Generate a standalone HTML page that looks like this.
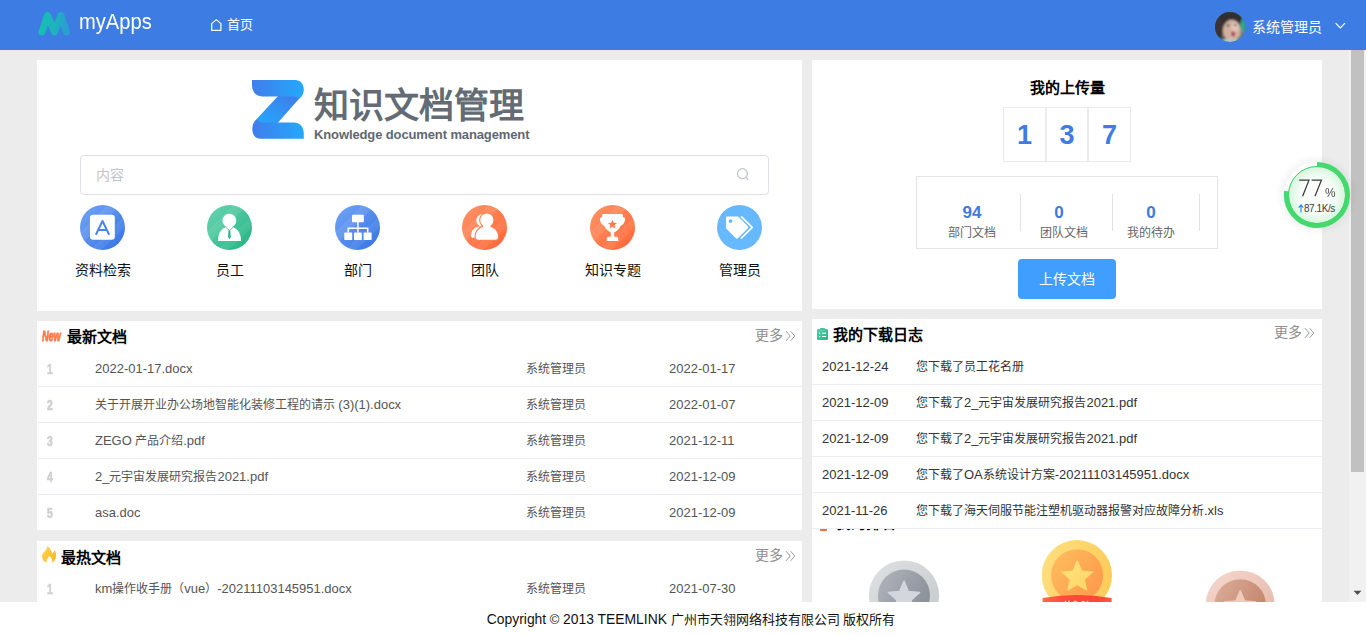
<!DOCTYPE html><html lang="zh-CN"><head><meta charset="utf-8"><title>myApps</title><style>
*{box-sizing:border-box;margin:0;padding:0}
html,body{width:1366px;height:635px;overflow:hidden}
body{position:relative;background:#ececec;font-family:"Liberation Sans",sans-serif;color:#333;font-size:12px}
.abs{position:absolute}
.e{font-size:1.0833em}.f{font-size:13.9px}
.hdr{position:absolute;left:0;top:0;width:1366px;height:50px;background:#3c7ce3}
.panel{position:absolute;background:#fff;overflow:hidden}
.txt{position:absolute;white-space:nowrap;line-height:20px;height:20px}
.ttl{font-size:15px;font-weight:bold;color:#000}
.more{font-size:14px;color:#8e8e8e}
.row{position:absolute;left:0;width:100%;height:36px;border-bottom:1px solid #ebecf4}
.num{position:absolute;left:10px;top:8px;line-height:20px;font-size:14px;font-weight:bold;color:#d0d0d0;-webkit-text-stroke:.7px #d0d0d0;transform:scaleX(.74);transform-origin:left center}
.doc{position:absolute;left:58px;top:8px;line-height:20px;color:#555;white-space:nowrap}
.aut{position:absolute;left:489px;top:8px;line-height:20px;color:#555;white-space:nowrap}
.dat{position:absolute;left:632px;top:8px;line-height:20px;color:#555;white-space:nowrap}
.ld{position:absolute;left:10px;top:8px;line-height:20px;color:#333;white-space:nowrap}
.lm{position:absolute;left:104px;top:8px;line-height:20px;color:#333;white-space:nowrap}
.ico{position:absolute;width:45px;height:45px;top:145px}
.lab{position:absolute;top:200px;width:100px;text-align:center;font-size:14px;line-height:20px;color:#111;white-space:nowrap}
</style></head><body>
<div class="hdr">
<svg class="abs" style="left:36px;top:9px" width="38" height="30" viewBox="0 0 38 30"><defs><linearGradient id="mg" x1="0" y1="0" x2="1" y2="0"><stop offset="0" stop-color="#17bdb6"/><stop offset=".55" stop-color="#1db3bd"/><stop offset="1" stop-color="#2a9fd2"/></linearGradient></defs><path d="M6 23 L11.5 6.5 L18.5 23 L25 6.5 L30.5 23" fill="none" stroke="url(#mg)" stroke-width="7" stroke-linecap="round" stroke-linejoin="round"/></svg>
<div class="txt" style="left:79px;top:9px;font-size:22px;line-height:26px;height:26px;color:#fff;transform:scaleX(.915);transform-origin:left center">myApps</div>
<svg class="abs" style="left:210px;top:18px" width="13" height="14" viewBox="0 0 13 14"><path d="M1.7 5.6 L6.3 1.6 L10.9 5.6 V12.3 H1.7 Z" fill="none" stroke="#fff" stroke-width="1.2" stroke-linejoin="round"/></svg>
<div class="txt" style="left:227px;top:15px;font-size:13px;color:#fff">首页</div>
<svg class="abs" style="left:1215px;top:12px" width="30" height="30" viewBox="0 0 30 30"><defs><clipPath id="avc"><circle cx="15" cy="15" r="15"/></clipPath><filter id="avb" x="-20%" y="-20%" width="140%" height="140%"><feGaussianBlur stdDeviation=".9"/></filter></defs><g clip-path="url(#avc)"><rect width="30" height="30" fill="#55625f"/><g filter="url(#avb)"><ellipse cx="13" cy="7" rx="14" ry="8.5" fill="#332d30"/><ellipse cx="3" cy="17" rx="5.5" ry="11" fill="#3a3336"/><ellipse cx="26" cy="24" rx="7" ry="8" fill="#6f7f7a"/><ellipse cx="16.8" cy="18.4" rx="9" ry="10.6" fill="#d2b0a0"/><ellipse cx="20" cy="15" rx="4" ry="5" fill="#e2c4b6"/><ellipse cx="13.2" cy="13.4" rx="1.6" ry="1.1" fill="#5a4444"/><ellipse cx="20.3" cy="13" rx="1.5" ry="1.1" fill="#6a5050"/><ellipse cx="18.2" cy="21.8" rx="2" ry="2.6" fill="#a93c4c"/><ellipse cx="29" cy="13" rx="3.4" ry="7" fill="#25aa8a"/><ellipse cx="15" cy="30" rx="9" ry="3.5" fill="#b5c7c2"/></g></g></svg>
<div class="txt" style="left:1252px;top:17px;font-size:14px;color:#fff">系统管理员</div>
<svg class="abs" style="left:1334px;top:21px" width="13" height="10" viewBox="0 0 13 10"><path d="M1.6 2.2 L6.3 6.9 L11 2.2" fill="none" stroke="#fff" stroke-width="1.2"/></svg>
</div>
<div class="panel" style="left:37px;top:60px;width:765px;height:251px">
<svg class="abs" style="left:215px;top:20px" width="53" height="60" viewBox="0 0 53 60"><defs><linearGradient id="zg1" x1="0" y1="0" x2="1" y2="0"><stop offset="0" stop-color="#417dec"/><stop offset="1" stop-color="#24a8fa"/></linearGradient><linearGradient id="zg2" x1="0" y1="1" x2="1" y2="0"><stop offset="0" stop-color="#23a9fb"/><stop offset="1" stop-color="#4179ea"/></linearGradient></defs><polygon points="27,15 49,16.5 24.8,44 6,44 4.2,39.4" fill="url(#zg2)"/><path d="M0 0 H43 C48.5 0 51.8 4 51.8 9.5 C51.8 14 50 17 47.3 18.4 L44 16.4 H10 C4 16.4 0 12 0 5 Z" fill="url(#zg1)"/><path d="M51.8 58.7 H8.8 C3.3 58.7 0.3 54.7 0.3 49.2 C0.3 45 1.8 41.8 4.4 39.2 L9 42.4 H41.8 C47.8 42.4 51.8 46.6 51.8 53.6 Z" fill="url(#zg1)"/></svg>

<div class="txt" style="left:277px;top:23px;font-size:35px;line-height:46px;height:46px;font-weight:bold;color:#636b74">知识文档管理</div>
<div class="txt" style="left:277px;top:66px;font-size:13px;line-height:18px;height:18px;font-weight:bold;color:#5f6771;letter-spacing:-.12px">Knowledge document management</div>
<div class="abs" style="left:43px;top:95px;width:689px;height:40px;border:1px solid #dcdfe6;border-radius:4px"></div>
<div class="txt" style="left:59px;top:105px;font-size:14px;color:#c0c4cc">内容</div>
<svg class="abs" style="left:698px;top:106px" width="16" height="16" viewBox="0 0 16 16"><circle cx="7.4" cy="7.6" r="5" fill="none" stroke="#c0c4cc" stroke-width="1.2"/><path d="M11 11.4 L13 13.6" stroke="#c0c4cc" stroke-width="1.3" stroke-linecap="round"/></svg>
<svg class="ico" style="left:43px" viewBox="0 0 45 45"><defs><linearGradient id="ib" x1="0" y1="0" x2="1" y2="1"><stop offset="0" stop-color="#73a6f5"/><stop offset="1" stop-color="#3472e4"/></linearGradient><linearGradient id="hl" x1="0" y1="0" x2="1" y2="1"><stop offset="0" stop-color="#fff" stop-opacity="0"/><stop offset=".3" stop-color="#fff" stop-opacity="0"/><stop offset=".3" stop-color="#fff" stop-opacity=".085"/><stop offset=".45" stop-color="#fff" stop-opacity=".085"/><stop offset=".45" stop-color="#fff" stop-opacity="0"/><stop offset=".62" stop-color="#fff" stop-opacity="0"/><stop offset=".62" stop-color="#fff" stop-opacity=".065"/><stop offset=".74" stop-color="#fff" stop-opacity=".065"/><stop offset=".74" stop-color="#fff" stop-opacity="0"/></linearGradient></defs><circle cx="22.5" cy="22.5" r="22.5" fill="url(#ib)"/><circle cx="22.5" cy="22.5" r="22.5" fill="url(#hl)"/><rect x="10" y="9.8" width="24.8" height="24.9" rx="3.2" fill="#fff"/><path d="M16.2 29 L22.5 16 L28.8 29 M18.2 25 H26.8" fill="none" stroke="#4a84ea" stroke-width="2" stroke-linecap="round" stroke-linejoin="round"/></svg>

<div class="lab" style="left:15.5px">资料检索</div>
<svg class="ico" style="left:170px" viewBox="0 0 45 45"><defs><linearGradient id="ig" x1="0" y1="0" x2="1" y2="1"><stop offset="0" stop-color="#6ad5b2"/><stop offset="1" stop-color="#22b282"/></linearGradient></defs><circle cx="22.5" cy="22.5" r="22.5" fill="url(#ig)"/><circle cx="22.5" cy="22.5" r="22.5" fill="url(#hl)"/><circle cx="22.4" cy="15.7" r="6.9" fill="#fff"/><path d="M11 35.9 C11 27 15.5 21.8 22.4 21.8 C29.3 21.8 34 27 34 35.9 Z" fill="#fff"/><path d="M19 22.6 L22.4 25.2 L25.8 22.6" fill="none" stroke="#3fbf95" stroke-width=".8"/><path d="M21.6 25 H23.2 L23.9 32 L22.4 34.2 L20.9 32 Z" fill="#35b98c"/></svg>

<div class="lab" style="left:142.5px">员工</div>
<svg class="ico" style="left:298px" viewBox="0 0 45 45"><circle cx="22.5" cy="22.5" r="22.5" fill="url(#ib)"/><circle cx="22.5" cy="22.5" r="22.5" fill="url(#hl)"/><rect x="17" y="9.8" width="11.8" height="7.4" rx=".8" fill="#fff"/><path d="M22.9 17 V23.2 M13.3 27.5 V23.2 H32.7 V27.5 M22.9 23.2 V27.5" fill="none" stroke="#fff" stroke-width="1.5"/><rect x="9.3" y="27.4" width="7.9" height="7.6" rx=".6" fill="#fff"/><rect x="19" y="27.4" width="7.8" height="7.6" rx=".6" fill="#fff"/><rect x="28.6" y="27.4" width="8" height="7.6" rx=".6" fill="#fff"/></svg>

<div class="lab" style="left:270.5px">部门</div>
<svg class="ico" style="left:425px" viewBox="0 0 45 45"><defs><linearGradient id="io" x1="0" y1="0" x2="1" y2="1"><stop offset="0" stop-color="#ff9468"/><stop offset="1" stop-color="#ff6536"/></linearGradient></defs><circle cx="22.5" cy="22.5" r="22.5" fill="url(#io)"/><circle cx="22.5" cy="22.5" r="22.5" fill="url(#hl)"/><circle cx="20.6" cy="15.4" r="6.3" fill="#fff"/><path d="M9.1 30.4 C9.1 25 13 21.6 19 21.6 H24 V32.8 H11.4 C9.9 32.8 9.1 31.9 9.1 30.4 Z" fill="#fff"/><g stroke="#ff8153" stroke-width="2.2"><circle cx="24.8" cy="15" r="6.6" fill="#fff"/><path d="M13.6 32 C13.6 25.6 18 21.4 24.8 21.4 C31.6 21.4 36 25.6 36 32 C36 33.8 35 34.7 33.4 34.7 H16.2 C14.6 34.7 13.6 33.8 13.6 32 Z" fill="#fff"/></g><circle cx="24.8" cy="15" r="6.6" fill="#fff"/><path d="M13.6 32 C13.6 25.6 18 21.4 24.8 21.4 C31.6 21.4 36 25.6 36 32 C36 33.8 35 34.7 33.4 34.7 H16.2 C14.6 34.7 13.6 33.8 13.6 32 Z" fill="#fff"/><rect x="21" y="19" width="7.6" height="4.4" fill="#fff"/></svg>

<div class="lab" style="left:397.5px">团队</div>
<svg class="ico" style="left:553px" viewBox="0 0 45 45"><circle cx="22.5" cy="22.5" r="22.5" fill="url(#io)"/><circle cx="22.5" cy="22.5" r="22.5" fill="url(#hl)"/><path d="M13.5 9 H31.5 C32.6 9 33.2 9.8 33 10.8 L32.8 12 C34.4 12 35.2 13.2 35 14.8 C34.6 18 32.8 20.2 30.6 21 C28.8 24.6 26.4 26.6 24.2 27.4 V31.8 H26.6 C27.6 31.8 28.2 32.6 28.2 33.6 V36 H16.8 V33.6 C16.8 32.6 17.4 31.8 18.4 31.8 H20.8 V27.4 C18.6 26.6 16.2 24.6 14.4 21 C12.2 20.2 10.4 18 10 14.8 C9.8 13.2 10.6 12 12.2 12 L12 10.8 C11.8 9.8 12.4 9 13.5 9 Z" fill="#fff"/><path d="M22.5 14.8 L23.8 17.8 L27 18.1 L24.6 20.2 L25.3 23.4 L22.5 21.7 L19.7 23.4 L20.4 20.2 L18 18.1 L21.2 17.8 Z" fill="#ff7a4c"/></svg>

<div class="lab" style="left:525.5px">知识专题</div>
<svg class="ico" style="left:680px" viewBox="0 0 45 45"><circle cx="22.5" cy="22.5" r="22.5" fill="#66b8ff"/><path d="M10.4 11.6 H20.6 C21.2 11.6 21.6 11.8 22 12.2 L30.6 21 C31.4 21.8 31.4 22.8 30.6 23.6 L21.2 33 C20.4 33.8 19.4 33.8 18.6 33 L9.6 24 C9.2 23.6 9 23.2 9 22.6 V13 C9 12.2 9.6 11.6 10.4 11.6 Z" fill="#fff"/><circle cx="13.6" cy="16.1" r="1.9" fill="#66b8ff"/><path d="M24.6 11.9 L35.2 22.3 L24.4 33.2" fill="none" stroke="#fff" stroke-width="1.7" stroke-linecap="round" stroke-linejoin="round"/></svg>

<div class="lab" style="left:652.5px">管理员</div>
</div>
<div class="panel" style="left:812px;top:60px;width:510px;height:249px">
<div class="txt ttl" style="left:0;width:510px;text-align:center;top:18px">我的上传量</div>
<div class="abs" style="left:191px;top:47px;width:43px;height:55px;border:1px solid #ebebeb;text-align:center;line-height:54px;font-size:27px;font-weight:bold;color:#407be2">1</div>
<div class="abs" style="left:234px;top:47px;width:42px;height:55px;border:1px solid #ebebeb;text-align:center;line-height:54px;font-size:27px;font-weight:bold;color:#407be2">3</div>
<div class="abs" style="left:276px;top:47px;width:43px;height:55px;border:1px solid #ebebeb;text-align:center;line-height:54px;font-size:27px;font-weight:bold;color:#407be2">7</div>
<div class="abs" style="left:104px;top:116px;width:302px;height:73px;border:1px solid #e4e4e4"></div>
<div class="abs" style="left:208px;top:134px;width:1px;height:37px;background:#e2e2e2"></div>
<div class="abs" style="left:300px;top:134px;width:1px;height:37px;background:#e2e2e2"></div>
<div class="abs" style="left:387px;top:134px;width:1px;height:37px;background:#e2e2e2"></div>
<div class="txt" style="left:120px;width:80px;text-align:center;top:143px;font-size:17px;font-weight:bold;color:#3f7be1">94</div>
<div class="txt" style="left:120px;width:80px;text-align:center;top:163px;font-size:12px;color:#666">部门文档</div>
<div class="txt" style="left:207px;width:80px;text-align:center;top:143px;font-size:17px;font-weight:bold;color:#3f7be1">0</div>
<div class="txt" style="left:212px;width:80px;text-align:center;top:163px;font-size:12px;color:#666">团队文档</div>
<div class="txt" style="left:299px;width:80px;text-align:center;top:143px;font-size:17px;font-weight:bold;color:#3f7be1">0</div>
<div class="txt" style="left:299px;width:80px;text-align:center;top:163px;font-size:12px;color:#666">我的待办</div>
<div class="abs" style="left:206px;top:199px;width:98px;height:40px;border-radius:4px;background:#409eff;color:#fff;font-size:14px;line-height:40px;text-align:center">上传文档</div>
</div>
<div class="panel" style="left:37px;top:321px;width:765px;height:210px">
<div class="abs" style="left:4.5px;top:6px;font-size:15.5px;line-height:18px;font-weight:bold;font-style:italic;color:#ff7a48;-webkit-text-stroke:.9px #ff7a48;transform:scaleX(.6);transform-origin:left center;letter-spacing:-.3px">New</div>
<div class="txt ttl" style="left:30px;top:6px">最新文档</div>
<div class="txt more" style="left:718px;top:4px">更多<svg width="11" height="12" viewBox="0 0 11 12" style="vertical-align:-2px;margin-left:1.5px"><path d="M1 1.2 L5.2 6 L1 10.8 M5.6 1.2 L9.8 6 L5.6 10.8" fill="none" stroke="#9a9a9a" stroke-width="1"/></svg></div>
<div class="row" style="top:30px"><span class="num">1</span><span class="doc"><span class="e">2022-01-17.docx</span></span><span class="aut">系统管理员</span><span class="dat"><span class="e">2022-01-17</span></span></div>
<div class="row" style="top:66px"><span class="num">2</span><span class="doc">关于开展开业办公场地智能化装修工程的请示 <span class="e">(3)(1).docx</span></span><span class="aut">系统管理员</span><span class="dat"><span class="e">2022-01-07</span></span></div>
<div class="row" style="top:102px"><span class="num">3</span><span class="doc"><span class="e">ZEGO</span> 产品介绍<span class="e">.pdf</span></span><span class="aut">系统管理员</span><span class="dat"><span class="e">2021-12-11</span></span></div>
<div class="row" style="top:138px"><span class="num">4</span><span class="doc"><span class="e">2_</span>元宇宙发展研究报告<span class="e">2021.pdf</span></span><span class="aut">系统管理员</span><span class="dat"><span class="e">2021-12-09</span></span></div>
<div class="row" style="top:174px"><span class="num">5</span><span class="doc"><span class="e">asa.doc</span></span><span class="aut">系统管理员</span><span class="dat"><span class="e">2021-12-09</span></span></div>
</div>
<div class="panel" style="left:37px;top:541px;width:765px;height:70px">
<svg class="abs" style="left:4px;top:4px" width="17" height="20" viewBox="0 0 17 20"><defs><linearGradient id="fg" x1="0" y1="0" x2="1" y2="1"><stop offset="0" stop-color="#ffd55c"/><stop offset="1" stop-color="#fdb515"/></linearGradient></defs><path d="M6.6 1 C8.6 2.6 10.6 5.4 11 8.6 C12.2 7.8 13.2 6.4 13.6 5 C15.4 8 16 12.6 13.2 16 C12.6 16.8 12 17.4 11.2 17.9 C12 15.2 10.2 12.6 8.3 11.1 C7.2 12.8 4.6 15 5.8 17.9 C3 17 0.9 14.4 0.9 11.6 C0.9 8.6 3.4 7.4 4.9 5 C5.7 3.7 6.3 2.3 6.6 1 Z" fill="url(#fg)"/></svg>

<div class="txt ttl" style="left:24px;top:7px">最热文档</div>
<div class="txt more" style="left:718px;top:4px">更多<svg width="11" height="12" viewBox="0 0 11 12" style="vertical-align:-2px;margin-left:1.5px"><path d="M1 1.2 L5.2 6 L1 10.8 M5.6 1.2 L9.8 6 L5.6 10.8" fill="none" stroke="#9a9a9a" stroke-width="1"/></svg></div>
<div class="row" style="top:30px"><span class="num">1</span><span class="doc"><span class="e">km</span>操作收手册（<span class="e">vue</span>）<span class="e">-20211103145951.docx</span></span><span class="aut">系统管理员</span><span class="dat"><span class="e">2021-07-30</span></span></div>
</div>
<div class="panel" style="left:812px;top:319px;width:510px;height:290px">
<div class="abs" style="left:8px;top:203px;width:7px;height:9px;background:#ff6a3d;border-radius:1px"></div>
<div class="txt ttl" style="left:24px;top:194px">我的排名</div>
<div class="abs" style="left:0;top:0;width:510px;height:210px;background:#fff">
<svg class="abs" style="left:4px;top:8px" width="14" height="14" viewBox="0 0 14 14"><defs><linearGradient id="cg" x1="0" y1="0" x2="1" y2="1"><stop offset="0" stop-color="#52cfa8"/><stop offset="1" stop-color="#27b585"/></linearGradient></defs><rect x="1" y="1.9" width="11" height="11.2" rx="1.3" fill="url(#cg)"/><rect x="4" y="1" width="5.1" height="2.4" rx=".7" fill="#3fc598"/><path d="M4 3.4 H9.1" stroke="#7fdcc0" stroke-width=".5"/><path d="M3 6.2 H4.2 M6 6.2 H10 M3 9.5 H4.2 M6 9.5 H10" stroke="#fff" stroke-width="1.1"/></svg>

<div class="txt ttl" style="left:21px;top:6px">我的下载日志</div>
<div class="txt more" style="left:462px;top:3px">更多<svg width="11" height="12" viewBox="0 0 11 12" style="vertical-align:-2px;margin-left:1.5px"><path d="M1 1.2 L5.2 6 L1 10.8 M5.6 1.2 L9.8 6 L5.6 10.8" fill="none" stroke="#9a9a9a" stroke-width="1"/></svg></div>
<div class="row" style="top:30px"><span class="ld"><span class="e">2021-12-24</span></span><span class="lm">您下载了员工花名册</span></div>
<div class="row" style="top:66px"><span class="ld"><span class="e">2021-12-09</span></span><span class="lm">您下载了<span class="e">2_</span>元宇宙发展研究报告<span class="e">2021.pdf</span></span></div>
<div class="row" style="top:102px"><span class="ld"><span class="e">2021-12-09</span></span><span class="lm">您下载了<span class="e">2_</span>元宇宙发展研究报告<span class="e">2021.pdf</span></span></div>
<div class="row" style="top:138px"><span class="ld"><span class="e">2021-12-09</span></span><span class="lm">您下载了<span class="e">OA</span>系统设计方案<span class="e">-20211103145951.docx</span></span></div>
<div class="row" style="top:174px"><span class="ld"><span class="e">2021-11-26</span></span><span class="lm">您下载了海天伺服节能注塑机驱动器报警对应故障分析<span class="e">.xls</span></span></div>
</div>
<svg class="abs" style="left:0;top:200px" width="510" height="90" viewBox="0 200 510 90"><defs><linearGradient id="s1" x1="0" y1="0" x2="1" y2="1"><stop offset="0" stop-color="#dfe2e3"/><stop offset="1" stop-color="#c3c8cb"/></linearGradient><linearGradient id="s2" x1="0" y1="0" x2="1" y2=".6"><stop offset="0" stop-color="#b2b5bc"/><stop offset="1" stop-color="#8a9098"/></linearGradient><linearGradient id="g1" x1="0" y1="0" x2="1" y2=".3"><stop offset="0" stop-color="#ffe081"/><stop offset="1" stop-color="#fccd5c"/></linearGradient><linearGradient id="g2" x1="0" y1="0" x2="1" y2=".7"><stop offset="0" stop-color="#fdc05e"/><stop offset="1" stop-color="#ff9a4d"/></linearGradient><linearGradient id="g3" x1="0" y1="0" x2="1" y2="1"><stop offset="0" stop-color="#ffe384"/><stop offset="1" stop-color="#ffd461"/></linearGradient><linearGradient id="rb" x1="0" y1="0" x2="1" y2="0"><stop offset="0" stop-color="#ff6a40"/><stop offset=".3" stop-color="#ff4a3a"/><stop offset=".8" stop-color="#ff4638"/><stop offset="1" stop-color="#ff5a3c"/></linearGradient><linearGradient id="b1" x1="0" y1="0" x2="1" y2="1"><stop offset="0" stop-color="#f5d8cf"/><stop offset="1" stop-color="#e3b3a3"/></linearGradient><linearGradient id="b2" x1="0" y1="0" x2="1" y2=".6"><stop offset="0" stop-color="#dcae9b"/><stop offset="1" stop-color="#c2846a"/></linearGradient></defs><circle cx="92" cy="276.6" r="35.2" fill="url(#s1)"/><circle cx="92" cy="276.5" r="26" fill="url(#s2)"/><polygon points="92.00,262.00 96.49,272.42 107.79,273.47 99.26,280.96 101.76,292.03 92.00,286.24 82.24,292.03 84.74,280.96 76.21,273.47 87.51,272.42" fill="#d3d6dd" stroke="#d3d6dd" stroke-width="1.2" stroke-linejoin="round"/><circle cx="264.9" cy="256.3" r="35.2" fill="url(#g1)"/><circle cx="265.1" cy="256.3" r="26.1" fill="url(#g2)"/><polygon points="265.20,242.00 269.53,252.05 280.42,253.06 272.20,260.27 274.60,270.94 265.20,265.36 255.80,270.94 258.20,260.27 249.98,253.06 260.87,252.05" fill="url(#g3)" stroke="#ffdc72" stroke-width="1.2" stroke-linejoin="round"/><path d="M230.6 279 Q265 273 299.6 279 V290 H230.6 Z" fill="url(#rb)"/><path d="M253.5 284 v-2.2 M257 284 v-2.4 M261 284 q2 -3.4 4 -.6 M269 284 q2 -3 4.4 -.2 M275.5 284 v-2.2" stroke="#fff" stroke-width="1.4" fill="none" opacity=".75"/><circle cx="428.2" cy="286" r="34.6" fill="url(#b1)"/><circle cx="428.2" cy="286" r="25.8" fill="url(#b2)"/><polygon points="428.20,271.50 432.66,281.86 443.89,282.90 435.42,290.35 437.90,301.35 428.20,295.59 418.50,301.35 420.98,290.35 412.51,282.90 423.74,281.86" fill="#efcbbd" stroke="#efcbbd" stroke-width="1.2" stroke-linejoin="round"/></svg>
</div>
<div class="abs" style="left:1349px;top:50px;width:17px;height:552px;background:#f1f1f1"></div>
<div class="abs" style="left:1351px;top:50px;width:13px;height:422px;background:#c1c1c1"></div>
<svg class="abs" style="left:1353px;top:590px" width="9" height="6" viewBox="0 0 9 6"><path d="M0.5 0.8 H8.5 L4.5 5 Z" fill="#505050"/></svg>
<div class="abs" style="left:1276px;top:153.6px;width:82px;height:82px;border-radius:50%;background:radial-gradient(circle,rgba(0,0,0,.05) 0,rgba(0,0,0,.035) 34px,rgba(0,0,0,.015) 38px,rgba(0,0,0,0) 41px)"></div><svg class="abs" style="left:1283px;top:160.6px" width="68" height="68" viewBox="0 0 68 68"><defs><radialGradient id="wg" cx=".5" cy=".5" r=".5"><stop offset="0" stop-color="#fff"/><stop offset=".6" stop-color="#f7fdf8"/><stop offset="1" stop-color="#d6f5dd"/></radialGradient></defs><circle cx="34" cy="34" r="33" fill="#fff"/><circle cx="34" cy="34" r="28.5" fill="url(#wg)" stroke="#33cf63" stroke-width="1"/><path d="M34 3.3999999999999986 A30.6 30.6 0 1 1 3.64 30.16" fill="none" stroke="#43d96d" stroke-width="4.9"/><path d="M16.2 19.2 H26 L19.6 35.2 M28.6 19.2 H38.4 L32 35.2" fill="none" stroke="#3a3a3a" stroke-width="1.25" stroke-linejoin="miter"/></svg><div class="txt" style="left:1324.5px;top:182.5px;font-size:12.5px;color:#4a4a4a;transform:scaleX(.95);transform-origin:left center">%</div><svg class="abs" style="left:1297.6px;top:204px" width="6" height="9" viewBox="0 0 6 9"><path d="M3 8.4 V1.4 M0.7 3.6 L3 1 L5.3 3.6" fill="none" stroke="#2e8ff2" stroke-width="1.2"/></svg><div class="txt" style="left:1304px;top:198.5px;font-size:10px;color:#3d3d3d;letter-spacing:-.45px">87.1K/s</div>
<div class="abs" style="left:0;top:602px;width:1366px;height:33px;background:#fff"></div>
<div class="txt" style="left:0;width:1382px;text-align:center;top:609px;font-size:13px;color:#111"><span class="f">Copyright</span> © <span class="f">2013 TEEMLINK</span> 广州市天翎网络科技有限公司 版权所有</div>
</body></html>
